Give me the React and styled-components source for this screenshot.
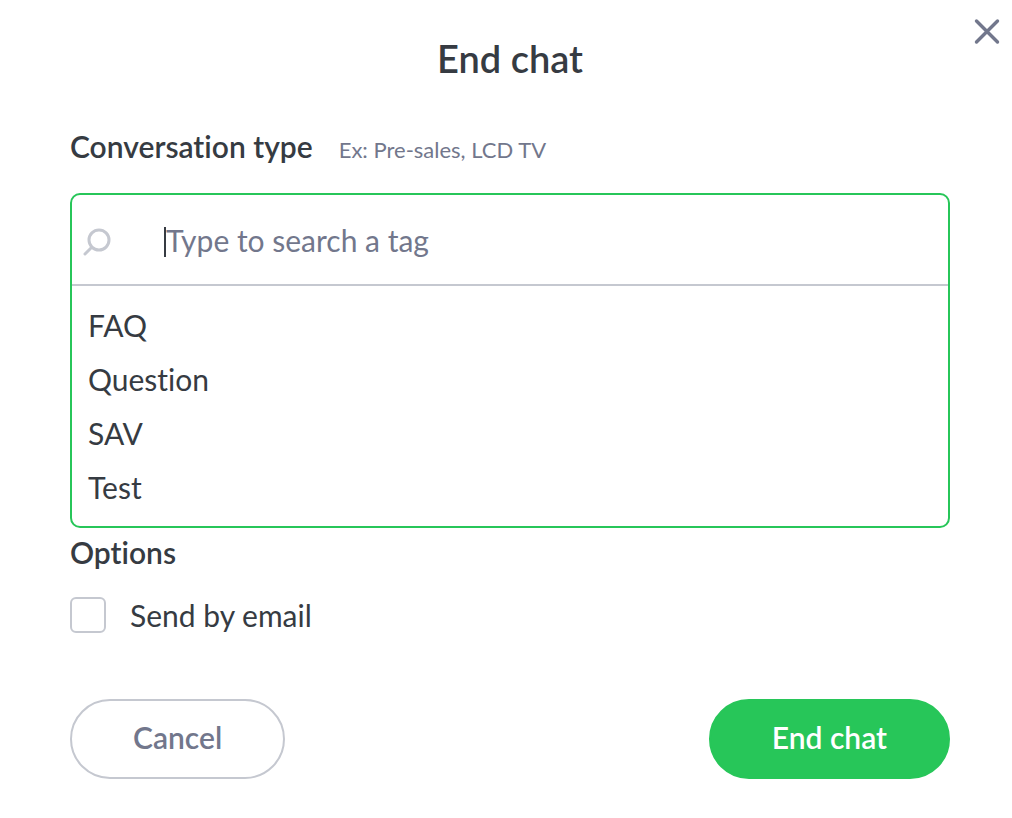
import React, { useState } from 'react';
import styled, { createGlobalStyle } from 'styled-components';

const tags = ['FAQ', 'Question', 'SAV', 'Test'];

const GlobalStyle = createGlobalStyle`
  * {
    box-sizing: border-box;
  }
  body {
    margin: 0;
    background: #fff;
    color: #363b42;
    font-family: Lato, "Open Sans", sans-serif;
    font-size: 30px;
    font-variant-ligatures: none;
    line-height: 40px;
  }
  button, input {
    font: inherit;
    color: inherit;
  }
`;

const Modal = styled.form`
  position: relative;
  padding: 34px 62px 39px 70px;
`;

const CloseButton = styled.button`
  position: absolute;
  top: 16px;
  right: 9px;
  display: flex;
  padding: 0;
  border: none;
  background: none;
  color: #72778c;
  cursor: pointer;
`;

const Title = styled.h1`
  margin: 0;
  font-size: 38px;
  font-weight: 600;
  line-height: 48px;
  text-align: center;
`;

const FieldHeader = styled.div`
  display: flex;
  align-items: baseline;
  gap: 26px;
  margin: 44px 0 23px;
`;

const FieldLabel = styled.label`
  font-weight: 600;
`;

const Hint = styled.span`
  font-size: 22px;
  color: #72778c;
`;

const TagPicker = styled.div`
  border: 2px solid #27c659;
  border-radius: 10px;
`;

const SearchRow = styled.div`
  display: flex;
  align-items: center;
  height: 91px;
  padding: 4px 10px 0;
  border-bottom: 2px solid #c5c8d0;
  color: #c5c8d0;
`;

const Caret = styled.span`
  width: 2px;
  height: 30px;
  margin-left: 52px;
  background: #363b42;
`;

const SearchInput = styled.input`
  flex: 1;
  min-width: 0;
  padding: 0 0 4px;
  border: none;
  outline: none;
  background: transparent;
  color: #363b42;
  caret-color: transparent;

  &::placeholder {
    color: #72778c;
    opacity: 1;
  }
`;

const TagList = styled.ul`
  margin: 0;
  padding: 12px 0;
  list-style: none;
`;

const TagButton = styled.button`
  display: block;
  width: 100%;
  padding: 0 16px;
  border: none;
  background: none;
  line-height: 54px;
  text-align: left;
  cursor: pointer;
`;

const Options = styled.fieldset`
  margin: 0;
  padding: 0;
  border: none;
`;

const Legend = styled.legend`
  padding: 4px 0 0;
  font-weight: 600;
`;

const CheckLabel = styled.label`
  display: flex;
  align-items: center;
  gap: 24px;
  margin-top: 23px;
`;

const Checkbox = styled.input`
  appearance: none;
  width: 36px;
  height: 36px;
  margin: 0;
  border: 2px solid #c5c8d0;
  border-radius: 6px;
  background: #fff;

  &:checked {
    border-color: #27c659;
    background: #27c659;
  }
`;

const Footer = styled.div`
  display: flex;
  justify-content: space-between;
  margin-top: 64px;
`;

const Button = styled.button`
  height: 80px;
  padding: 0 61px 4px;
  border: 2px solid ${({ $primary }) => ($primary ? '#27c659' : '#c5c8d0')};
  border-radius: 40px;
  background: ${({ $primary }) => ($primary ? '#27c659' : '#fff')};
  color: ${({ $primary }) => ($primary ? '#fff' : '#72778c')};
  font-weight: 600;
  cursor: pointer;
`;

function CloseIcon() {
  return (
    <svg width="32" height="32" viewBox="0 0 32 32" fill="none" stroke="currentColor" strokeWidth="3.4" strokeLinecap="round">
      <path d="M5.5 5 26.5 26M26.5 5 5.5 26" />
    </svg>
  );
}

function SearchIcon() {
  return (
    <svg width="30" height="30" viewBox="0 0 30 30" fill="none" stroke="currentColor" strokeWidth="3" strokeLinecap="round">
      <circle cx="17" cy="13" r="10" />
      <path d="M9.5 20.5 3 27" />
    </svg>
  );
}

function App() {
  const [search, setSearch] = useState('');
  const [sendEmail, setSendEmail] = useState(false);

  const found = tags.filter(tag => tag.toLowerCase().includes(search.toLowerCase()));

  return (
    <>
      <GlobalStyle />
      <Modal onSubmit={e => e.preventDefault()}>
        <CloseButton type="button" aria-label="Close">
          <CloseIcon />
        </CloseButton>
        <Title>End chat</Title>

        <FieldHeader>
          <FieldLabel htmlFor="tag-search">Conversation type</FieldLabel>
          <Hint>Ex: Pre-sales, LCD TV</Hint>
        </FieldHeader>

        <TagPicker>
          <SearchRow>
            <SearchIcon />
            <Caret />
            <SearchInput
              id="tag-search"
              type="text"
              autoComplete="off"
              placeholder="Type to search a tag"
              value={search}
              onChange={e => setSearch(e.target.value)}
            />
          </SearchRow>
          <TagList>
            {found.map(tag => (
              <li key={tag}>
                <TagButton type="button" onClick={() => setSearch(tag)}>{tag}</TagButton>
              </li>
            ))}
          </TagList>
        </TagPicker>

        <Options>
          <Legend>Options</Legend>
          <CheckLabel>
            <Checkbox
              type="checkbox"
              checked={sendEmail}
              onChange={e => setSendEmail(e.target.checked)}
            />
            Send by email
          </CheckLabel>
        </Options>

        <Footer>
          <Button type="button">Cancel</Button>
          <Button type="submit" $primary>End chat</Button>
        </Footer>
      </Modal>
    </>
  );
}

export default App;
